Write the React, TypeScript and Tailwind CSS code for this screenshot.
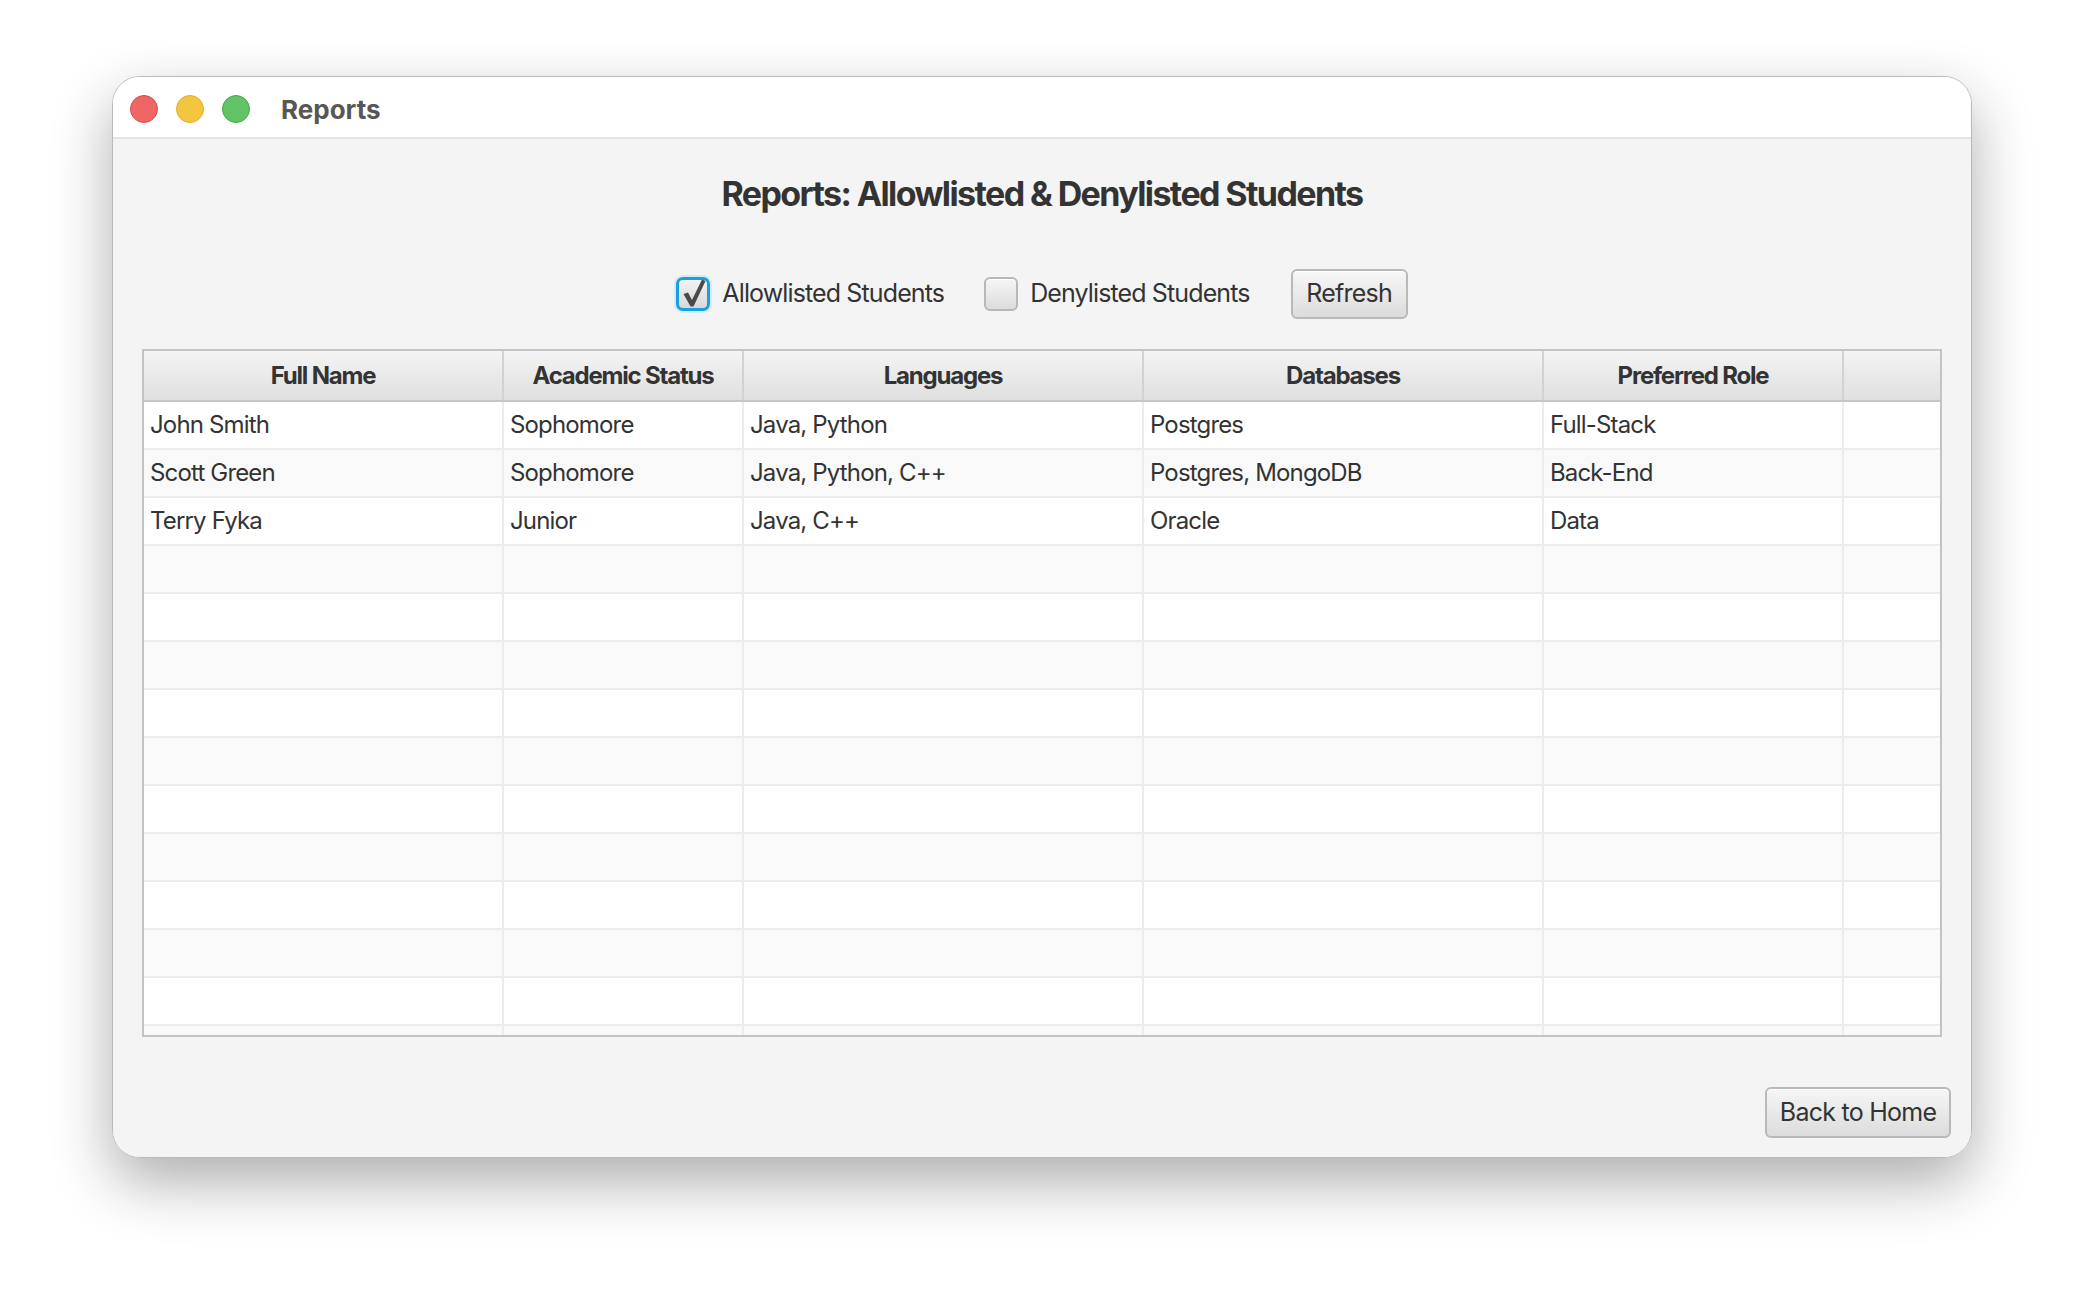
const columns = [
  { title: 'Full Name', width: 'w-[360px]' },
  { title: 'Academic Status', width: 'w-[240px]' },
  { title: 'Languages', width: 'w-[400px]' },
  { title: 'Databases', width: 'w-[400px]' },
  { title: 'Preferred Role', width: 'w-[300px]' },
]

const students = [
  ['John Smith', 'Sophomore', 'Java, Python', 'Postgres', 'Full-Stack'],
  ['Scott Green', 'Sophomore', 'Java, Python, C++', 'Postgres, MongoDB', 'Back-End'],
  ['Terry Fyka', 'Junior', 'Java, C++', 'Oracle', 'Data'],
]

const TOTAL_ROWS = 14

export default function App() {
  const rows = Array.from({ length: TOTAL_ROWS }, (_, i) => students[i] ?? ['', '', '', '', ''])

  return (
    <div className="min-h-screen bg-white font-['Inter','Noto_Sans',sans-serif] text-[#333] pt-[76px] pl-[112px]">
      <div className="w-[1860px] h-[1082px] rounded-[28px] border border-[#b9b9b9] overflow-hidden flex flex-col shadow-[0_24px_60px_rgba(0,0,0,0.32)]">
        {/* title bar */}
        <div className="h-[62px] flex-none bg-white border-b-2 border-[#e4e4e4] flex items-center pl-[17px] pt-[3px]">
          <div className="flex items-center gap-[18px]">
            <span className="w-[28px] h-[28px] rounded-full bg-[#ee6766] border border-[#dc4a48]" />
            <span className="w-[28px] h-[28px] rounded-full bg-[#f4c63f] border border-[#e0ad27]" />
            <span className="w-[28px] h-[28px] rounded-full bg-[#61c366] border border-[#45a84b]" />
          </div>
          <span className="ml-[31px] text-[26px] font-bold text-[#575757] leading-none pt-[2px]">Reports</span>
        </div>

        {/* content */}
        <div className="flex-1 bg-[#f4f4f4] flex flex-col px-[20px] pt-[35px] pb-[19px]">
          <h1 className="text-center text-[34px] leading-[40px] font-bold tracking-[-0.047em] text-[#333]">
            Reports: Allowlisted &amp; Denylisted Students
          </h1>

          <div className="mt-[55px] h-[50px] flex items-center justify-center">
            <div className="flex items-center">
              <Checkbox checked />
              <span className="ml-[12px] text-[25px] tracking-[-0.035em] text-[#333]">Allowlisted Students</span>
            </div>
            <div className="flex items-center ml-[40px]">
              <Checkbox />
              <span className="ml-[12px] text-[25px] tracking-[-0.035em] text-[#333]">Denylisted Students</span>
            </div>
            <button className="ml-[41px] w-[117px] h-[50px] rounded-[6px] border-2 border-[#b9b9b9] bg-gradient-to-b from-[#f7f7f7] to-[#dcdcdc] text-[25px] tracking-[-0.03em] text-[#333] shadow-[inset_0_1px_0_#fff]">
              Refresh
            </button>
          </div>

          {/* table */}
          <div className="mt-[30px] mx-[9px] h-[688px] border-2 border-[#c4c4c4] bg-white overflow-hidden flex flex-col">
            <div className="h-[51px] flex-none flex border-b-2 border-[#c6c6c6] bg-gradient-to-b from-[#f4f4f4] to-[#dfdfdf]">
              {columns.map(col => (
                <div
                  key={col.title}
                  className={`${col.width} flex-none flex items-center justify-center border-r-2 border-[#d2d2d2] text-[24px] font-bold tracking-[-0.05em] text-[#333]`}
                >
                  {col.title}
                </div>
              ))}
              <div className="flex-1" />
            </div>

            {rows.map((row, i) => (
              <div
                key={i}
                className={`h-[48px] flex-none flex border-b-2 border-[#ececec] ${i % 2 === 0 ? 'bg-white' : 'bg-[#f9f9f9]'}`}
              >
                {row.map((cell, j) => (
                  <div
                    key={j}
                    className={`${columns[j].width} flex-none flex items-center pl-[6px] border-r-2 border-[#ececec] text-[24px] tracking-[-0.035em] text-[#333] whitespace-nowrap`}
                  >
                    {cell}
                  </div>
                ))}
                <div className="flex-1" />
              </div>
            ))}
          </div>

          <div className="mt-auto flex justify-end">
            <button className="w-[186px] h-[51px] rounded-[6px] border-2 border-[#b9b9b9] bg-gradient-to-b from-[#f6f6f6] to-[#dcdcdc] text-[25px] tracking-[-0.03em] text-[#333] shadow-[inset_0_1px_0_#fff]">
              Back to Home
            </button>
          </div>
        </div>
      </div>
    </div>
  )
}

function Checkbox({ checked }: { checked?: boolean }) {
  if (checked) {
    return (
      <div className="relative w-[34px] h-[34px] rounded-[7px] border-[3px] border-[#1c9fe0] shadow-[0_0_0_2px_#d2ebf8] bg-gradient-to-b from-[#f2f2f2] to-[#d9d9d9]">
        <svg className="absolute left-[3px] top-[-2px]" width="24" height="30" viewBox="0 0 24 30" fill="none">
          <path d="M1.5 16 L6 14.5 L10 22 L20 1.5 L23.5 3 L11.5 28.5 L8.5 28.5 Z" fill="#4a4a4a" />
        </svg>
      </div>
    )
  }
  return (
    <div className="w-[34px] h-[34px] rounded-[6px] border-2 border-[#b8b8b8] bg-gradient-to-b from-[#f6f6f6] to-[#dcdcdc] shadow-[inset_0_1px_0_#fff]" />
  )
}
